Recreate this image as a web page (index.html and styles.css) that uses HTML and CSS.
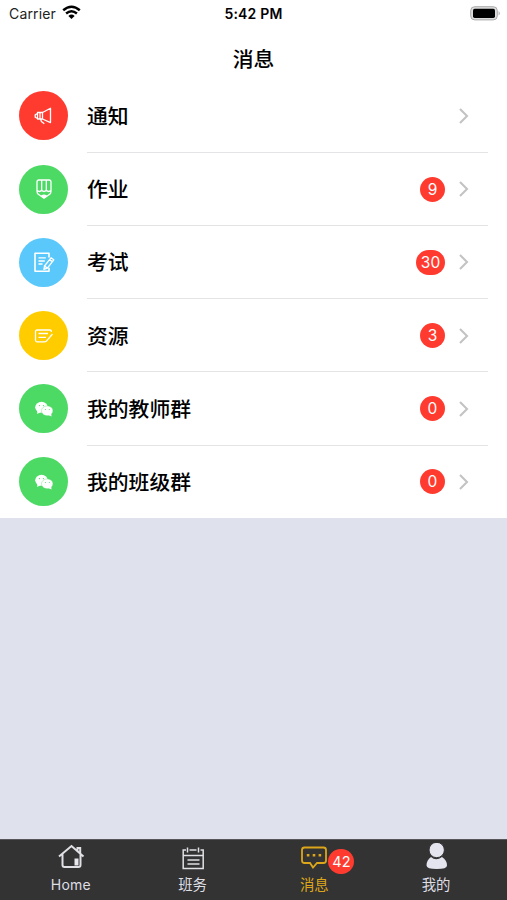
FILE: index.html
```html
<!DOCTYPE html>
<html lang="zh-CN">
<head>
<meta charset="utf-8">
<meta name="viewport" content="width=device-width, initial-scale=1">
<title>消息</title>
<link rel="stylesheet" href="styles.css">
</head>
<body>
<div class="app">
  <header class="status">
    <div class="carrier"><span>Carrier</span>
      <svg width="19" height="15" viewBox="0 0 19 15" fill="none" stroke="#000" stroke-width="2.5"><path d="M1.2 5.2Q9.5-1.700 17.800 5.200M4.100 8.500Q9.500 4 14.900 8.500"/><path d="M6.400 10.900Q9.500 8.300 12.600 10.900L9.500 14z" fill="#000" stroke="none"/></svg>
    </div>
    <div class="time">5:42 PM</div>
    <svg class="battery" width="31" height="15" viewBox="0 0 31 15"><rect x=".7" y=".7" width="26.6" height="13.2" rx="4" fill="#ddd" stroke="#aaa"/><rect x="3" y="2.7" width="22" height="9.2" rx="1.7"/><path d="M28.6 5Q31 7.3 28.6 9.6z" fill="#aaa"/></svg>
  </header>
  <h1 class="title">消息</h1>
  <main class="list">
    <div class="row">
      <span class="avatar red"><svg width="24" height="24" viewBox="0 0 24 24"><path d="M5.500 8.500h5v6.500h-5zM10.500 8.500l8-4.300v14.400l-8-3.600M5.500 9.500L3.200 10.800v2.400l2.300 1.300M8 8.500v6.500M8.700 15.300l.7 2.200 2.900 2.300"/></svg></span>
      <div class="body"><span class="name">通知</span><svg class="arrow" width="10" height="16" viewBox="0 0 10 16"><path d="M1 1l7 7-7 7"/></svg></div>
    </div>
    <div class="row">
      <span class="avatar green"><svg width="24" height="24" viewBox="0 0 24 24"><path d="M7 3h10q2 0 2 2v9.500q0 2-1.700 3L12 21.200l-5.300-3.700Q5 16.500 5 14.500V5q0-2 2-2zM9.700 3.500v9.500M14.300 3.500v9.500M5 13.300q2.500 2.400 4.700 0 2.300 2.400 4.600 0 2.400 2.400 4.700 0"/><path d="M9.500 19q2.500-1.700 5 0L12 20.800z" fill="#fff"/></svg></span>
      <div class="body"><span class="name">作业</span><span class="badge">9</span><svg class="arrow" width="10" height="16" viewBox="0 0 10 16"><path d="M1 1l7 7-7 7"/></svg></div>
    </div>
    <div class="row">
      <span class="avatar blue"><svg width="24" height="24" viewBox="0 0 24 24"><path stroke-width="1.6" d="M17 7.500V3.300H3v18h14v-3.500"/><path d="M6.500 7.800h7.300M6.500 11h6.300M6.500 14h4M12.500 16l6.500-8.200 2.800 2-6.400 8.300-3.500 1.300zM17.500 9.600l2.800 2M12.500 16l2.900 2.100"/></svg></span>
      <div class="body"><span class="name">考试</span><span class="badge wide">30</span><svg class="arrow" width="10" height="16" viewBox="0 0 10 16"><path d="M1 1l7 7-7 7"/></svg></div>
    </div>
    <div class="row">
      <span class="avatar yellow"><svg width="24" height="24" viewBox="0 0 24 24"><path d="M19.300 8V7.200Q19.300 6 18 6H5Q3.500 6 3.500 7.500v8.800Q3.500 17.800 5 17.800h7.500M6.500 9.500h9.500M6.500 13.300h7.500M20.500 10l-6.300 7.300-1.700.5"/></svg></span>
      <div class="body"><span class="name">资源</span><span class="badge">3</span><svg class="arrow" width="10" height="16" viewBox="0 0 10 16"><path d="M1 1l7 7-7 7"/></svg></div>
    </div>
    <div class="row">
      <span class="avatar green"><svg class="solid" width="24" height="24" viewBox="0 0 24 24"><ellipse cx="9.500" cy="10.300" rx="6.300" ry="5.500"/><path d="M5.500 13l-.3 4 3.700-2z"/><ellipse class="front" cx="15.200" cy="13.800" rx="5.700" ry="4.900"/><path d="M16 18l3.500 1.400-.3-3z"/><g class="eyes"><circle cx="7.500" cy="8.600" r=".6"/><circle cx="11.500" cy="8.600" r=".6"/><circle cx="13.500" cy="12.600" r=".5"/><circle cx="17.300" cy="12.600" r=".5"/></g></svg></span>
      <div class="body"><span class="name">我的教师群</span><span class="badge">0</span><svg class="arrow" width="10" height="16" viewBox="0 0 10 16"><path d="M1 1l7 7-7 7"/></svg></div>
    </div>
    <div class="row">
      <span class="avatar green"><svg class="solid" width="24" height="24" viewBox="0 0 24 24"><ellipse cx="9.500" cy="10.300" rx="6.300" ry="5.500"/><path d="M5.500 13l-.3 4 3.700-2z"/><ellipse class="front" cx="15.200" cy="13.800" rx="5.700" ry="4.900"/><path d="M16 18l3.500 1.400-.3-3z"/><g class="eyes"><circle cx="7.500" cy="8.600" r=".6"/><circle cx="11.500" cy="8.600" r=".6"/><circle cx="13.500" cy="12.600" r=".5"/><circle cx="17.300" cy="12.600" r=".5"/></g></svg></span>
      <div class="body"><span class="name">我的班级群</span><span class="badge">0</span><svg class="arrow" width="10" height="16" viewBox="0 0 10 16"><path d="M1 1l7 7-7 7"/></svg></div>
    </div>
  </main>
  <nav class="tabs">
    <a class="tab"><svg width="28" height="28" viewBox="0 0 28 28" stroke-width="2"><path d="M2 13.500L14.500 3l12 10.500M5.500 11v11q0 2 2 2h14q2 0 2-2V11M20.500 8V5h2.700v5.200"/><path d="M17.500 15.500h4v7h-4z" fill="#e8e8ee" stroke="none"/></svg><span class="home">Home</span></a>
    <a class="tab"><svg width="28" height="28" viewBox="0 0 28 28" stroke-width="1.500"><path d="M7 7H4.200v18.500h20V7H21.500M10.500 7h7M4.200 12.500h20M8.500 4.500v5M19.500 4.500v5M8.500 17h12M8.500 21h12"/></svg><span>班务</span></a>
    <a class="tab active"><svg width="28" height="28" viewBox="0 0 28 28" stroke-width="1.800"><path d="M4.500 4.500h19Q26 4.500 26 7v10.500Q26 20 23.500 20H17l-4 4.500L10 20H4.500Q2 20 2 17.500V7Q2 4.500 4.500 4.500z"/><path stroke-width="2.600" d="M6.800 12.200h2.600M12.700 12.200h2.600M18.600 12.200h2.600"/></svg><span>消息</span><b class="badge tab-badge">42</b></a>
    <a class="tab"><svg width="28" height="28" viewBox="0 0 28 28"><path d="M9 14Q14 18.500 20 14q5 3 5 8.500 0 3.500-10.200 3.500T4.500 22.500Q4.500 17 9 14z" fill="#e5e5ef" stroke="none"/><circle cx="14.700" cy="7" r="7.700" fill="#e5e5ef" stroke="#333" stroke-width="1"/></svg><span>我的</span></a>
  </nav>
</div>
</body>
</html>
```
FILE: styles.css
```css
* { box-sizing: border-box; }
body { margin: 0; font-family: Inter, "Noto Sans CJK SC", sans-serif; color: #000; }
.app { height: 900px; display: flex; flex-direction: column; background: #dfe2ed; overflow: hidden; }
.status { height: 28px; flex: none; display: grid; grid-template-columns: 1fr auto 1fr; align-items: center; padding: 0 6px 1px 9px; background: #fff; font-size: 14px; }
.carrier { display: flex; align-items: center; gap: 6px; color: #222; letter-spacing: .15px; }
.carrier svg { margin-top: -2px; }
.time { font-size: 14px; font-weight: 600; letter-spacing: .2px; margin-right: 3px; }
.battery { justify-self: end; }
.title { flex: none; height: 51.250px; margin: 0; background: #fff; font-size: 20.800px; font-weight: 500; line-height: 64px; text-align: center; }
.list { flex: none; background: #fff; }
.row { height: 73.250px; display: flex; align-items: stretch; padding: 0 19px; gap: 19px; }
.row:last-child { height: 72.750px; }
.avatar { width: 49px; height: 49px; flex: none; align-self: center; border-radius: 50%; display: grid; place-items: center; }
.avatar svg { fill: none; stroke: #fff; stroke-width: 1.3; stroke-linejoin: round; }
.avatar .solid { fill: #fff; stroke: none; }
.solid .front { stroke: #4cd964; stroke-width: .35; }
.solid .eyes { fill: #4cd964; }
.red { background: #ff3b30; }
.green { background: #4cd964; }
.blue { background: #5ac8fa; }
.yellow { background: #fc0; }
.body { flex: 1; display: flex; align-items: center; padding: 1px 19px 0 0; border-bottom: 1px solid #e4e4e6; }
.row:last-child .body { border-bottom-color: transparent; }
.name { flex: 1; padding-top: 2px; font-size: 20.800px; font-weight: 500; line-height: 30px; }
.badge { min-width: 25px; height: 25px; padding: 0 5px; border-radius: 13px; background: #ff3b30; color: #fff; font: 400 15.500px/25px Inter, sans-serif; text-align: center; }
.wide { width: 29px; padding: 0; }
.arrow { margin-left: 14px; fill: none; stroke: #c3c3c5; stroke-width: 2.100; }
.tabs { height: 61px; margin-top: auto; flex: none; display: grid; grid-template-columns: repeat(4, 1fr); padding: 0 10px; background: #333; border-top: 1px solid #55555a; }
.tab { position: relative; display: flex; flex-direction: column; align-items: center; padding-top: 3px; color: #dedee4; font-size: 14.400px; line-height: 20px; }
.tab svg { display: block; fill: none; stroke: #e0e0e5; margin-bottom: 4px; }
.home { font-size: 14px; letter-spacing: .2px; }
.tab.active { color: #dda61a; }
.tab.active svg { stroke: #dda61a; }
.tab-badge { position: absolute; left: calc(50% + 14px); top: 9px; width: 26px; padding: 0; font-size: 14.500px; }
```
